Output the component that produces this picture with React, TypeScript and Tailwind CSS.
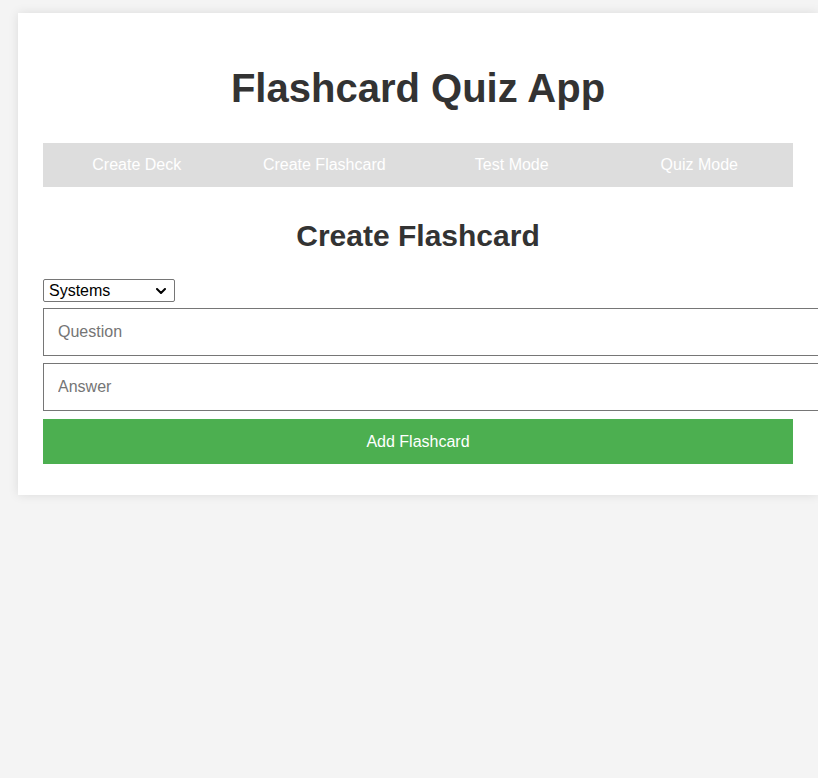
import React, { useState } from 'react';

const tabs = ['Create Deck', 'Create Flashcard', 'Test Mode', 'Quiz Mode'];

export default function App() {
  const [deck, setDeck] = useState('Systems');
  const [question, setQuestion] = useState('');
  const [answer, setAnswer] = useState('');

  return (
    <div className="min-h-screen bg-[#f4f4f4] overflow-hidden pt-[13px] font-['Liberation_Sans',Arial,sans-serif] text-[#333]">
      <div className="ml-[18px] w-[800px] bg-white px-[25px] pt-[25px] pb-[31px] shadow-[0_0_10px_rgba(0,0,0,0.1)]">
        <h1 className="mt-[27px] text-center text-[40px] font-bold leading-[46px]">Flashcard Quiz App</h1>

        <nav className="mt-[32px] flex h-[44px] bg-[#ddd]">
          {tabs.map((t) => (
            <a key={t} href="#" className="flex-1 text-center text-[16px] leading-[44px] text-white">
              {t}
            </a>
          ))}
        </nav>

        <h2 className="mt-[32px] text-center text-[30px] font-bold leading-[34px]">Create Flashcard</h2>

        {/* deck picker, native arrow replaced so it looks like the bold chevron */}
        <div className="relative mt-[26px] h-[23px] w-[132px]">
          <select
            value={deck}
            onChange={(e) => setDeck(e.target.value)}
            className="block h-[23px] w-[132px] appearance-none rounded-[2px] border border-[#767676] bg-white pl-[5px] text-[16px] leading-[21px] text-black"
          >
            <option>Systems</option>
            <option>Networks</option>
          </select>
          <svg
            className="pointer-events-none absolute right-[9px] top-[9px]"
            width="10"
            height="6"
            viewBox="0 0 10 6"
            fill="none"
          >
            <path d="M1 1l4 4 4-4" stroke="#000" strokeWidth="2" strokeLinecap="round" strokeLinejoin="round" />
          </svg>
        </div>

        <input
          value={question}
          onChange={(e) => setQuestion(e.target.value)}
          placeholder="Question"
          className="mt-[6px] block h-[48px] w-[780px] max-w-none border border-[#767676] px-[14px] text-[16px] text-black placeholder:text-[#757575]"
        />
        <input
          value={answer}
          onChange={(e) => setAnswer(e.target.value)}
          placeholder="Answer"
          className="mt-[7px] block h-[48px] w-[780px] max-w-none border border-[#767676] px-[14px] text-[16px] text-black placeholder:text-[#757575]"
        />

        <button className="mt-[8px] block h-[45px] w-full bg-[#4caf50] text-[16px] text-white">Add Flashcard</button>
      </div>
    </div>
  );
}
